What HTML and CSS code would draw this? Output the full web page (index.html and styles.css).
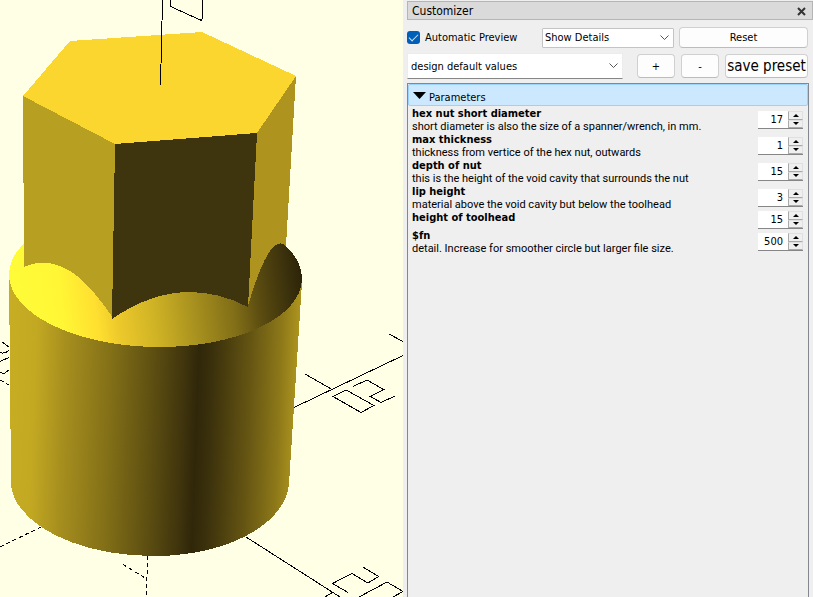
FILE: index.html
```html
<!DOCTYPE html>
<html lang="en">
<head>
<meta charset="utf-8">
<meta name="viewport" content="width=device-width, initial-scale=1">
<title>Customizer</title>
<link rel="stylesheet" href="styles.css">
</head>
<body>
<div class="app">
  <main class="viewer">
    <svg class="scene" viewBox="0 0 403 597" preserveAspectRatio="xMinYMin slice" role="img" aria-label="3D preview of hex tool">
      <defs>
        <linearGradient id="outer" gradientUnits="userSpaceOnUse" x1="9" y1="350" x2="301" y2="361">
          <stop offset="0" stop-color="#c6ad23"/>
          <stop offset=".09" stop-color="#c3a922"/>
          <stop offset=".2" stop-color="#a58d1e"/>
          <stop offset=".34" stop-color="#857218"/>
          <stop offset=".5" stop-color="#5c4e11"/>
          <stop offset=".6" stop-color="#40350d"/>
          <stop offset=".65" stop-color="#30270a"/>
          <stop offset=".7" stop-color="#3b310c"/>
          <stop offset=".83" stop-color="#665613"/>
          <stop offset=".93" stop-color="#8d7819"/>
          <stop offset="1" stop-color="#b2991f"/>
        </linearGradient>
        <linearGradient id="inner" gradientUnits="userSpaceOnUse" x1="15" y1="290" x2="300" y2="250">
          <stop offset="0" stop-color="#fffb38"/>
          <stop offset=".15" stop-color="#fff735"/>
          <stop offset=".27" stop-color="#ffdf30"/>
          <stop offset=".34" stop-color="#edc92b"/>
          <stop offset=".47" stop-color="#cfb325"/>
          <stop offset=".6" stop-color="#aa931f"/>
          <stop offset=".75" stop-color="#806d17"/>
          <stop offset=".84" stop-color="#5a4b10"/>
          <stop offset=".94" stop-color="#3b310c"/>
          <stop offset="1" stop-color="#2b2309"/>
        </linearGradient>
      </defs>
      <g class="axes">
        <path d="M170.500 0V6.500L201.500 20.500L202.500 18V0"/>
        <path d="M294 407.500L403 355.500M305 374L332 389.500M389 334L403 341.500"/>
        <path d="M353 386.500L367 380L383.500 389.500L370.500 396.500L381 402.500L395 396"/>
        <path d="M346 390L333 396.500L361 412.500L374 405.500Z"/>
        <path d="M246 537L340 597M363 567L378.500 576.500L368 583L352 573.500L332.500 583.500L348 592.500M325 597L333 592M359 597L387 582L403 591.500L393 597"/>
        <path d="M2 342L9 347M0 352.500Q5 354.500 9 350M0 361.500L9 357.500M0 372.500L4 373.500L9 370"/>
        <path class="dash" d="M0 547L43 526M123 564.500L146 578.500M147.500 556L146.500 597M0 380L9 385"/>
      </g>
      <g class="solid">
        <path fill="url(#outer)" d="M9 276L10 372L11 485C15 524 77 556 154 556C228 556 285 524 289 484L302 282L156 230Z"/>
        <ellipse fill="url(#inner)" cx="155.500" cy="276.500" rx="146.500" ry="70.500" transform="rotate(1 155.500 276.500)"/>
        <path fill="#ffffe5" d="M24 190H286V245Q279 239 271 250L24 240Z"/>
        <path fill="#b79f22" d="M23 96L115 144L113 318Q96 293 82 280Q52 254 24 267Z"/>
        <path fill="#ae941e" d="M257 133L296 76L286 246Q278 238 268 254Q258 271 248 306Z"/>
        <path fill="#3e340d" d="M115 144L257 133L248 307Q180 272 112 319Z"/>
        <path fill="#fad62e" d="M70 41L202 32L296 76L257 133L115 144L23 96Z"/>
      </g>
      <path class="axis-line" d="M162.500 0L160.500 85"/>
    </svg>
  </main>

  <aside class="dock">
    <header class="titlebar">
      <h1 class="title">Customizer</h1>
      <button class="close" type="button" aria-label="Close">
        <svg width="9" height="9" viewBox="0 0 9 9" aria-hidden="true"><path d="M1 1L8 8M8 1L1 8" stroke="#333" stroke-width="2"/></svg>
      </button>
    </header>

    <div class="body">
      <div class="toolbar top">
        <label class="check"><input type="checkbox" checked><span>Automatic Preview</span></label>
        <span class="select boxed">
          <select aria-label="Detail level"><option>Show Details</option></select>
          <svg class="chevron" viewBox="0 0 9 6" aria-hidden="true"><path d="M.5 .5L4.500 4.500L8.500 .5"/></svg>
        </span>
        <button class="btn reset" type="button">Reset</button>
      </div>

      <div class="toolbar presets">
        <span class="select flat">
          <select aria-label="Preset"><option>design default values</option></select>
          <svg class="chevron" viewBox="0 0 9 6" aria-hidden="true"><path d="M.5 .5L4.500 4.500L8.500 .5"/></svg>
        </span>
        <button class="btn small" type="button">+</button>
        <button class="btn small" type="button">-</button>
        <button class="btn save" type="button">save preset</button>
      </div>

      <section class="params">
        <button class="group" type="button" aria-expanded="true">
          <svg width="13" height="7" viewBox="0 0 13 7" aria-hidden="true"><path d="M0 0H13L6.500 7Z"/></svg>
          <span>Parameters</span>
        </button>
        <div class="row">
          <label for="p1"><b>hex nut short diameter</b><span>short diameter is also the size of a spanner/wrench, in mm.</span></label>
          <div class="spin"><input id="p1" type="number" value="17"><div class="steps"><button type="button" aria-label="Increase"></button><button type="button" aria-label="Decrease"></button></div></div>
        </div>
        <div class="row">
          <label for="p2"><b>max thickness</b><span>thickness from vertice of the hex nut, outwards</span></label>
          <div class="spin"><input id="p2" type="number" value="1"><div class="steps"><button type="button" aria-label="Increase"></button><button type="button" aria-label="Decrease"></button></div></div>
        </div>
        <div class="row">
          <label for="p3"><b>depth of nut</b><span>this is the height of the void cavity that surrounds the nut</span></label>
          <div class="spin"><input id="p3" type="number" value="15"><div class="steps"><button type="button" aria-label="Increase"></button><button type="button" aria-label="Decrease"></button></div></div>
        </div>
        <div class="row">
          <label for="p4"><b>lip height</b><span>material above the void cavity but below the toolhead</span></label>
          <div class="spin"><input id="p4" type="number" value="3"><div class="steps"><button type="button" aria-label="Increase"></button><button type="button" aria-label="Decrease"></button></div></div>
        </div>
        <div class="row">
          <label for="p5"><b>height of toolhead</b></label>
          <div class="spin"><input id="p5" type="number" value="15"><div class="steps"><button type="button" aria-label="Increase"></button><button type="button" aria-label="Decrease"></button></div></div>
        </div>
        <div class="row">
          <label for="p6"><b>$fn</b><span>detail. Increase for smoother circle but larger file size.</span></label>
          <div class="spin"><input id="p6" type="number" value="500"><div class="steps"><button type="button" aria-label="Increase"></button><button type="button" aria-label="Decrease"></button></div></div>
        </div>
      </section>
    </div>
  </aside>
</div>
</body>
</html>
```
FILE: styles.css
```css
* { box-sizing: border-box; }

body {
  margin: 0;
  background: #efefef;
  color: #000;
  font: 11px/13px "DejaVu Sans Condensed", "DejaVu Sans", sans-serif;
}

button, input, select { font: inherit; color: inherit; margin: 0; }

.app {
  display: grid;
  grid-template-columns: minmax(0, 1fr) 410px;
  height: 100vh;
}

.viewer { background: #ffffe5; overflow: hidden; }
.scene { display: block; width: 100%; height: 100%; }
.axes path, .axis-line {
  fill: none;
  stroke: #000;
  stroke-width: 1;
  shape-rendering: crispEdges;
}
.axes .dash { stroke-dasharray: 4 3; }
.solid { shape-rendering: crispEdges; }

.dock {
  display: flex;
  flex-direction: column;
  padding: 1px 0 0 4px;
}

.titlebar {
  display: flex;
  align-items: center;
  justify-content: space-between;
  height: 19px;
  padding: 2px 6px 0 4px;
  border: 1px solid #b5b5b5;
  background: #dadada;
}
.title { margin: 0; font-size: 12px; font-weight: normal; }
.close { display: flex; padding: 0; border: 0; background: none; }

.body {
  display: flex;
  flex: 1;
  flex-direction: column;
  padding: 7px 4px 0 0;
}

.toolbar { display: flex; align-items: center; padding-right: 1px; }
.top { gap: 5px; margin-bottom: 5px; }
.presets { gap: 6px; margin-bottom: 4px; }

.check { display: flex; flex: 1; align-items: center; gap: 5px; white-space: nowrap; }
.check input {
  appearance: none;
  display: grid;
  place-items: center;
  width: 13px;
  height: 13px;
  border-radius: 3px;
  background: #005fb8;
}
.check input:checked::before {
  content: "";
  width: 8px;
  height: 4px;
  margin-bottom: 2px;
  border: solid #cfe2f3;
  border-width: 0 0 1px 1px;
  transform: rotate(-45deg);
}

.select { position: relative; display: block; }
.select select {
  appearance: none;
  display: block;
  width: 100%;
  height: 100%;
  padding: 0 20px 0 2px;
  border: 0;
  background: transparent;
}
.chevron {
  position: absolute;
  top: 50%;
  right: 4px;
  width: 9px;
  height: 6px;
  margin-top: -3px;
  fill: none;
  stroke: #555;
  pointer-events: none;
}
.boxed { width: 132px; height: 20px; border: 1px solid #c4c4c4; border-radius: 1px; background: #fff; }
.flat { flex: 1; height: 26px; margin-right: 8px; background: #fff; border: 1px solid #ececec; border-bottom-color: #868686; }
.flat select { padding-left: 3px; }

.btn {
  height: 24px;
  padding: 0;
  border: 1px solid #d0d0d0;
  border-bottom-color: #bcbcbc;
  border-radius: 4px;
  background: #fdfdfd;
  white-space: nowrap;
}
.reset { width: 129px; height: 21px; }
.small { width: 38px; }
.save { width: 83px; font-size: 15px; }

.params {
  flex: 1;
  border: 1px solid #828790;
  border-bottom: 0;
}
.group {
  display: flex;
  align-items: center;
  gap: 3px;
  width: 100%;
  height: 22px;
  margin-bottom: 1px;
  padding: 4px 4px 0;
  border: 1px solid #99d1ff;
  border-radius: 2px;
  background: #cce8ff;
}
.group svg { margin-bottom: 3px; }

.row {
  display: flex;
  align-items: center;
  justify-content: space-between;
  padding: 0 5px 0 4px;
}
.row label { align-self: flex-start; }
.row label b, .row label span { display: block; }
.row label span { font-family: Roboto, "DejaVu Sans Condensed", sans-serif; }

.spin {
  display: flex;
  height: 18px;
  border-bottom: 1px solid #868686;
}
.spin input {
  appearance: textfield;
  width: 30px;
  padding: 0 5px 0 0;
  border: 0;
  background: #fff;
  text-align: right;
}
.spin input::-webkit-inner-spin-button { appearance: none; display: none; }
.steps { display: flex; flex-direction: column; width: 15px; }
.steps button {
  display: grid;
  flex: 1;
  place-items: center;
  min-height: 0;
  padding: 0;
  border: 1px solid #e0e0e0;
  border-left-color: #aaa;
  border-bottom-color: #aaa;
  background: #efefef;
}
.steps button::before {
  content: "";
  border: solid transparent;
  border-width: 0 3px 3px;
  border-bottom-color: #000;
}
.steps button:last-child::before { border-width: 3px 3px 0; border-top-color: #000; }
```
